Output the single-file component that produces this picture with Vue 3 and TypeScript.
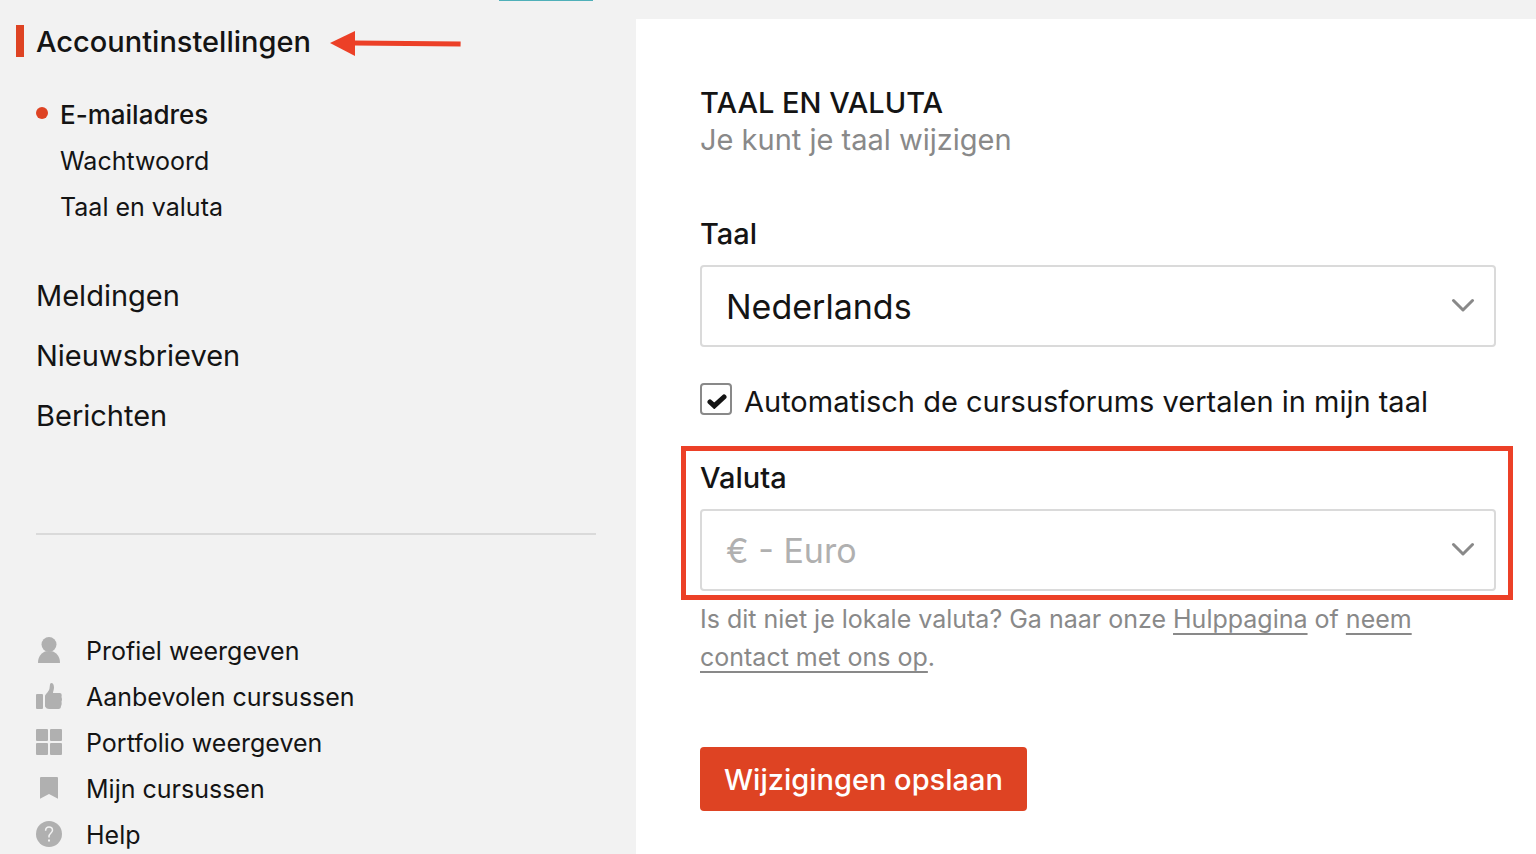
<script setup lang="ts">
import { ref } from 'vue'

interface NavLink {
  label: string
  icon: 'user' | 'thumb' | 'grid' | 'bookmark' | 'help'
}

const sections: string[] = ['Meldingen', 'Nieuwsbrieven', 'Berichten']
const subItems: string[] = ['E-mailadres', 'Wachtwoord', 'Taal en valuta']
const activeSub = ref('E-mailadres')

const links: NavLink[] = [
  { label: 'Profiel weergeven', icon: 'user' },
  { label: 'Aanbevolen cursussen', icon: 'thumb' },
  { label: 'Portfolio weergeven', icon: 'grid' },
  { label: 'Mijn cursussen', icon: 'bookmark' },
  { label: 'Help', icon: 'help' },
]

const language = ref('nl')
const currency = ref('eur')
const autoTranslate = ref(true)
</script>

<template>
  <div class="page">
    <aside class="sidebar">
      <div class="tab-edge"></div>
      <nav class="settings-nav">
        <div class="current">
          <a href="#account" class="section current-link">Accountinstellingen</a>
          <svg class="arrow" width="132" height="26" viewBox="0 0 132 26" aria-hidden="true">
            <path d="M24 11.9 130.600 12.900" stroke="#ec4027" stroke-width="5" />
            <path d="M0 12 25 0V25Z" fill="#ec4027" />
          </svg>
        </div>
        <ul class="sub-list">
          <li v-for="item in subItems" :key="item">
            <a href="#account" :class="['sub', { active: item === activeSub }]">{{ item }}</a>
          </li>
        </ul>
        <ul class="section-list">
          <li v-for="item in sections" :key="item">
            <a href="#sections" class="section">{{ item }}</a>
          </li>
        </ul>
      </nav>
      <hr class="divider" />
      <ul class="link-list">
        <li v-for="link in links" :key="link.label">
          <a href="#links" class="link">
            <svg class="icon" width="26" height="26" viewBox="0 0 26 26" fill="#b0b0b0" aria-hidden="true">
              <template v-if="link.icon === 'user'">
                <circle cx="13" cy="7.500" r="7.500" />
                <path d="M2 25.500C2 19.500 5.500 15.500 10 14.200H16C20.500 15.500 24 19.500 24 25.500Q24 26 23.500 26H2.500Q2 26 2 25.500Z" />
              </template>
              <template v-else-if="link.icon === 'thumb'">
                <rect x="0" y="11" width="7" height="15" rx="1" />
                <path d="M9 13.500C9 11 12.500 9.500 13.500 5.500C14 3 13.700 0 15.300 0C17 0 18 2 18 4.500C18 6.800 17 8.500 17 10H24Q26 10 25.700 12.500L25.500 14Q26 15.500 26 17L25.500 18.500Q25.900 20 25.500 22L25 23Q25 26 22.500 26H13Q10.500 26 9 23.500Z" />
              </template>
              <template v-else-if="link.icon === 'grid'">
                <rect x="0" y="0" width="12" height="12" rx="1" />
                <rect x="14" y="0" width="12" height="12" rx="1" />
                <rect x="0" y="14" width="12" height="12" rx="1" />
                <rect x="14" y="14" width="12" height="12" rx="1" />
              </template>
              <path v-else-if="link.icon === 'bookmark'" d="M5 2H21Q22 2 22 3V23.700L13 19 4 23.700V3Q4 2 5 2Z" />
              <template v-else>
                <circle cx="13" cy="13" r="13" />
                <path d="M9.600 9.800C9.600 7.300 11 6 13 6S16.500 7.300 16.500 9.300C16.500 11.800 13 12.200 13 15.500V16.500" fill="none" stroke="#f2f2f2" stroke-width="1.500" />
                <rect x="12" y="18.500" width="2" height="2" fill="#f2f2f2" />
              </template>
            </svg>
            <span>{{ link.label }}</span>
          </a>
        </li>
      </ul>
    </aside>

    <main class="panel">
      <form @submit.prevent>
        <h1 class="title">TAAL EN VALUTA</h1>
        <p class="subtitle">Je kunt je taal wijzigen</p>

        <div class="field">
          <label class="label" for="language">Taal</label>
          <div class="select-wrap">
            <select id="language" v-model="language" class="select">
              <option value="nl">Nederlands</option>
            </select>
            <svg class="chevron" width="24" height="14" viewBox="0 0 24 14" aria-hidden="true">
              <path d="M2.500 2.500 12 12 21.500 2.500" />
            </svg>
          </div>
        </div>

        <div class="check-row">
          <input id="translate" v-model="autoTranslate" type="checkbox" class="checkbox" />
          <label for="translate">Automatisch de cursusforums vertalen in mijn taal</label>
          <svg v-if="autoTranslate" class="tick" width="20" height="16" viewBox="0 0 20 16" aria-hidden="true">
            <path d="M3 9 7.300 12.900 17 4" />
          </svg>
        </div>

        <div class="field highlighted">
          <label class="label" for="currency">Valuta</label>
          <div class="select-wrap">
            <select id="currency" v-model="currency" class="select" disabled>
              <option value="eur">€ - Euro</option>
            </select>
            <svg class="chevron" width="24" height="14" viewBox="0 0 24 14" aria-hidden="true">
              <path d="M2.500 2.500 12 12 21.500 2.500" />
            </svg>
          </div>
        </div>

        <p class="hint">
          Is dit niet je lokale valuta? Ga naar onze <a href="#help">Hulppagina</a> of
          <a href="#contact">neem contact met ons op</a>.
        </p>

        <button type="submit" class="save">Wijzigingen opslaan</button>
      </form>
    </main>
  </div>
</template>

<style>
body {
  background: #f2f2f2;
}
</style>

<style scoped>
.page {
  display: grid;
  grid-template-columns: 636px minmax(0, 1fr);
  min-height: 100vh;
  background: #f2f2f2;
  color: #141414;
  font-family: Inter, "Liberation Sans", sans-serif;
  font-size: 29px;
}

ul {
  list-style: none;
  margin: 0;
  padding: 0;
}

a {
  color: inherit;
  text-decoration: none;
}

.sidebar {
  position: relative;
  padding: 22px 40px 0 36px;
}

.tab-edge {
  position: absolute;
  top: 0;
  right: 43px;
  width: 94px;
  height: 1px;
  background: #4fb0b9;
}

.section {
  display: block;
  line-height: 40px;
}

.current {
  position: relative;
}

.current-link {
  font-weight: 500;
}

.current-link::before {
  content: "";
  position: absolute;
  left: -20px;
  top: 3px;
  width: 8px;
  height: 32px;
  background: #de4323;
}

.arrow {
  position: absolute;
  left: 294px;
  top: 9px;
}

.sub-list {
  display: grid;
  gap: 8px;
  margin-top: 34px;
  padding-left: 24px;
}

.sub {
  position: relative;
  display: block;
  font-size: 25px;
  line-height: 38px;
}

.sub.active {
  font-size: 26px;
  font-weight: 500;
}

.sub.active::before {
  content: "";
  position: absolute;
  left: -24px;
  top: 11px;
  width: 12px;
  height: 12px;
  border-radius: 50%;
  background: #de4323;
}

.section-list {
  display: grid;
  gap: 20px;
  margin-top: 50px;
}

.divider {
  height: 2px;
  margin: 97px 0;
  border: 0;
  background: #dadada;
}

.link-list {
  display: grid;
  gap: 8px;
}

.link {
  display: flex;
  align-items: center;
  gap: 24px;
  font-size: 25px;
  line-height: 38px;
}

.icon {
  flex: none;
  margin-bottom: 2px;
}

.panel {
  margin-top: 19px;
  padding: 66px 40px 40px 64px;
  background: #fff;
}

.title {
  margin: 0;
  font-size: 29px;
  font-weight: 500;
  line-height: 36px;
}

.subtitle {
  margin: 0 0 56px;
  color: #898989;
  line-height: 38px;
}

.label {
  display: block;
  margin-bottom: 12px;
  font-weight: 500;
  line-height: 38px;
}

.select-wrap {
  position: relative;
}

.select {
  display: block;
  width: 100%;
  height: 82px;
  padding: 0 64px 0 24px;
  border: 2px solid #dadada;
  border-radius: 4px;
  appearance: none;
  background: #fff;
  color: #141414;
  font-family: inherit;
  font-size: 34px;
}

.select:disabled {
  color: #b0b0b0;
  opacity: 1;
}

.chevron {
  position: absolute;
  right: 21px;
  top: 33px;
  fill: none;
  stroke: #898989;
  stroke-width: 3;
  stroke-linecap: round;
  stroke-linejoin: round;
  pointer-events: none;
}

.check-row {
  position: relative;
  display: flex;
  gap: 12px;
  margin: 36px 0 38px;
  line-height: 38px;
}

.checkbox {
  flex: none;
  width: 32px;
  height: 32px;
  margin: 0;
  border: 2px solid #898989;
  border-radius: 4px;
  appearance: none;
  background: #fff;
}

.tick {
  position: absolute;
  left: 7px;
  top: 10px;
  fill: none;
  stroke: #141414;
  stroke-width: 5;
  stroke-linecap: round;
  pointer-events: none;
}

.highlighted {
  position: relative;
}

.highlighted::after {
  content: "";
  position: absolute;
  inset: -13px -17px -9px -19px;
  border: 5px solid #ec4027;
  pointer-events: none;
}

.hint {
  margin: 9px 0 71px;
  color: #898989;
  font-size: 25px;
  line-height: 38px;
}

.hint a {
  text-decoration: underline 2px;
  text-decoration-skip-ink: none;
  text-underline-offset: 5px;
}

.save {
  display: block;
  height: 64px;
  padding: 0 24px;
  border: 0;
  border-radius: 4px;
  background: #de4323;
  color: #fff;
  font-family: inherit;
  font-size: 29px;
  font-weight: 500;
}
</style>
